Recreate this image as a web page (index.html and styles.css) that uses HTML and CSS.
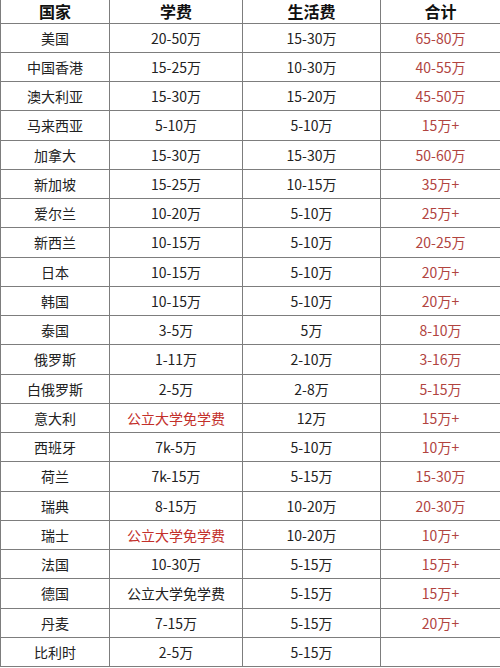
FILE: index.html
```html
<!DOCTYPE html>
<html lang="zh">
<head>
<meta charset="utf-8">
<link rel="stylesheet" href="styles.css">
</head>
<body>
<div class="table">
  <div class="row head"><div class="c">国家</div><div class="c">学费</div><div class="c">生活费</div><div class="c">合计</div></div>
  <div class="row"><div class="c">美国</div><div class="c">20-50万</div><div class="c">15-30万</div><div class="c red">65-80万</div></div>
  <div class="row"><div class="c">中国香港</div><div class="c">15-25万</div><div class="c">10-30万</div><div class="c red">40-55万</div></div>
  <div class="row"><div class="c">澳大利亚</div><div class="c">15-30万</div><div class="c">15-20万</div><div class="c red">45-50万</div></div>
  <div class="row"><div class="c">马来西亚</div><div class="c">5-10万</div><div class="c">5-10万</div><div class="c red">15万+</div></div>
  <div class="row"><div class="c">加拿大</div><div class="c">15-30万</div><div class="c">15-30万</div><div class="c red">50-60万</div></div>
  <div class="row"><div class="c">新加坡</div><div class="c">15-25万</div><div class="c">10-15万</div><div class="c red">35万+</div></div>
  <div class="row"><div class="c">爱尔兰</div><div class="c">10-20万</div><div class="c">5-10万</div><div class="c red">25万+</div></div>
  <div class="row"><div class="c">新西兰</div><div class="c">10-15万</div><div class="c">5-10万</div><div class="c red">20-25万</div></div>
  <div class="row"><div class="c">日本</div><div class="c">10-15万</div><div class="c">5-10万</div><div class="c red">20万+</div></div>
  <div class="row"><div class="c">韩国</div><div class="c">10-15万</div><div class="c">5-10万</div><div class="c red">20万+</div></div>
  <div class="row"><div class="c">泰国</div><div class="c">3-5万</div><div class="c">5万</div><div class="c red">8-10万</div></div>
  <div class="row"><div class="c">俄罗斯</div><div class="c">1-11万</div><div class="c">2-10万</div><div class="c red">3-16万</div></div>
  <div class="row"><div class="c">白俄罗斯</div><div class="c">2-5万</div><div class="c">2-8万</div><div class="c red">5-15万</div></div>
  <div class="row"><div class="c">意大利</div><div class="c red2">公立大学免学费</div><div class="c">12万</div><div class="c red">15万+</div></div>
  <div class="row"><div class="c">西班牙</div><div class="c">7k-5万</div><div class="c">5-10万</div><div class="c red">10万+</div></div>
  <div class="row"><div class="c">荷兰</div><div class="c">7k-15万</div><div class="c">5-15万</div><div class="c red">15-30万</div></div>
  <div class="row"><div class="c">瑞典</div><div class="c">8-15万</div><div class="c">10-20万</div><div class="c red">20-30万</div></div>
  <div class="row"><div class="c">瑞士</div><div class="c red2">公立大学免学费</div><div class="c">10-20万</div><div class="c red">10万+</div></div>
  <div class="row"><div class="c">法国</div><div class="c">10-30万</div><div class="c">5-15万</div><div class="c red">15万+</div></div>
  <div class="row"><div class="c">德国</div><div class="c">公立大学免学费</div><div class="c">5-15万</div><div class="c red">15万+</div></div>
  <div class="row"><div class="c">丹麦</div><div class="c">7-15万</div><div class="c">5-15万</div><div class="c red">20万+</div></div>
  <div class="row"><div class="c">比利时</div><div class="c">2-5万</div><div class="c">5-15万</div><div class="c red"></div></div>
</div>
</body>
</html>
```

FILE: styles.css
```css
html, body {
  margin: 0;
  padding: 0;
  background: #ffffff;
}
body {
  width: 500px;
  height: 668px;
  overflow: hidden;
  font-family: "Noto Sans CJK SC", "Noto Sans", sans-serif;
  color: #222222;
}
.table {
  display: flex;
  flex-direction: column;
  border-left: 1px solid #7d7d7d;
}
.row {
  display: grid;
  grid-template-columns: 109px 133px 138px 1fr;
  height: 29.25px;
  box-sizing: border-box;
  border-bottom: 1px solid #7d7d7d;
}
.row.head {
  height: 23.5px;
  font-weight: bold;
  font-size: 16px;
  color: #111111;
}
.c {
  display: flex;
  align-items: center;
  justify-content: center;
  font-size: 14px;
  line-height: 1;
  border-right: 1px solid #7d7d7d;
}
.head .c {
  font-size: 16px;
}
.c:last-child {
  border-right: none;
}
.red {
  color: #b1443f;
}
.red2 {
  color: #c3302b;
}
```
